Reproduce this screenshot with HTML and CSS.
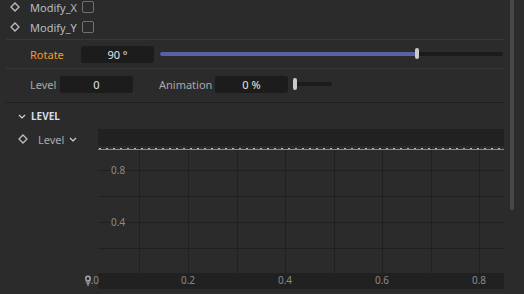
FILE: index.html
```html
<!DOCTYPE html>
<html lang="en">
<head>
    <meta charset="UTF-8">
    <title>Level Properties</title>
    <link rel="stylesheet" href="styles.css">
</head>
<body>
    <div class="app">
        <div class="panel">
            <!-- Toggles -->
            <div class="check-row">
                <svg class="diamond" viewBox="0 0 10 10"><path d="M5 1 L9 5 L5 9 L1 5 Z"/></svg>
                <span class="label light">Modify_X</span>
                <span class="checkbox"></span>
            </div>
            <div class="check-row">
                <svg class="diamond" viewBox="0 0 10 10"><path d="M5 1 L9 5 L5 9 L1 5 Z"/></svg>
                <span class="label light">Modify_Y</span>
                <span class="checkbox"></span>
            </div>
            <div class="sep"></div>

            <!-- Rotate -->
            <div class="param-row rotate-row">
                <span class="label accent rotate-label">Rotate</span>
                <div class="field">90 °</div>
                <div class="slider">
                    <div class="track"><div class="fill" style="width: 255px"></div></div>
                    <div class="handle" style="left: 255px"></div>
                </div>
            </div>
            <div class="sep"></div>

            <!-- Level / Animation -->
            <div class="param-row level-row">
                <span class="label level-label">Level</span>
                <div class="field">0</div>
                <span class="label anim-label">Animation</span>
                <div class="field">0 %</div>
                <div class="mini-slider">
                    <div class="handle"></div>
                    <div class="mini-track"></div>
                </div>
            </div>
            <div class="sep dark"></div>

            <!-- Level section -->
            <div class="section-head">
                <svg class="chevron" viewBox="0 0 8 5"><path d="M1 1 L4 4 L7 1"/></svg>
                <span class="section-title">LEVEL</span>
            </div>
            <div class="graph-row">
                <div class="curve-select">
                    <svg class="diamond" viewBox="0 0 10 10"><path d="M5 1 L9 5 L5 9 L1 5 Z"/></svg>
                    <span class="label">Level</span>
                    <svg class="chevron small" viewBox="0 0 8 5"><path d="M1 1 L4 4 L7 1"/></svg>
                </div>
                <svg class="graph" width="424" height="165" viewBox="0 0 424 165">
                    <rect x="18" y="0" width="406" height="17" fill="#212121"/>
                    <g stroke="#202020" stroke-width="1">
                        <line x1="59.5" y1="0" x2="59.5" y2="160"/>
                        <line x1="108.5" y1="0" x2="108.5" y2="160"/>
                        <line x1="157.5" y1="0" x2="157.5" y2="160"/>
                        <line x1="205.5" y1="0" x2="205.5" y2="160"/>
                        <line x1="254.5" y1="0" x2="254.5" y2="160"/>
                        <line x1="302.5" y1="0" x2="302.5" y2="160"/>
                        <line x1="351.5" y1="0" x2="351.5" y2="160"/>
                        <line x1="399.5" y1="0" x2="399.5" y2="160"/>
                        <line x1="18" y1="41.5" x2="424" y2="41.5"/>
                        <line x1="18" y1="67.5" x2="424" y2="67.5"/>
                        <line x1="18" y1="93.5" x2="424" y2="93.5"/>
                        <line x1="18" y1="119.5" x2="424" y2="119.5"/>
                    </g>
                    <line x1="18" y1="20.5" x2="424" y2="20.5" stroke="#8a8a8a" stroke-width="1"/>
                    <line x1="19" y1="19.5" x2="424" y2="19.5" stroke="#b8b8b8" stroke-width="1.2" stroke-dasharray="2 5"/>
                    <rect x="18" y="144" width="406" height="16" fill="#212121"/>
                    <g class="axis-text">
                        <text x="31" y="45">0.8</text>
                        <text x="31" y="97">0.4</text>
                        <text x="12" y="155" text-anchor="middle">0.0</text>
                        <text x="108" y="155" text-anchor="middle">0.2</text>
                        <text x="205" y="155" text-anchor="middle">0.4</text>
                        <text x="302" y="155" text-anchor="middle">0.6</text>
                        <text x="399" y="155" text-anchor="middle">0.8</text>
                    </g>
                    <g stroke="#9fb0bf" stroke-width="1.2" fill="none">
                        <circle cx="8" cy="149.5" r="2.3"/>
                        <line x1="8" y1="151.5" x2="8" y2="157"/>
                    </g>
                </svg>
            </div>
        </div>
        <div class="scrollbar"><div class="thumb"></div></div>
    </div>
</body>
</html>
```

FILE: styles.css
```css
* {
    box-sizing: border-box;
    margin: 0;
    padding: 0;
}

body {
    background-color: #2b2b2b;
    font-family: 'Noto Sans', 'Open Sans', sans-serif;
    font-size: 11px;
    color: #a8a8a8;
    overflow: hidden;
}

.app {
    display: flex;
    height: 294px;
}

.panel {
    width: 510px;
    flex: 0 0 510px;
    padding: 0 6px;
    margin-top: -3px;
}

.label {
    white-space: nowrap;
    color: #a9a9a9;
}

.light {
    color: #b9bcc4;
}

.accent {
    color: #f09a2e;
}

.diamond {
    width: 10px;
    height: 10px;
    flex: 0 0 10px;
}

.diamond path {
    fill: none;
    stroke: #bdbdbd;
    stroke-width: 1.3;
}

.check-row {
    display: flex;
    align-items: center;
    height: 20px;
    padding-left: 4px;
}

.check-row .label {
    margin-left: 10px;
}

.checkbox {
    width: 12px;
    height: 12px;
    margin-left: 5px;
    border: 1px solid #707070;
    border-radius: 2px;
}

.sep {
    height: 1px;
    background: #383838;
}

.check-row + .sep {
    margin-top: 2px;
}

.sep.dark {
    background: #1f1f1f;
    margin-top: 3px;
}

.param-row {
    display: flex;
    align-items: center;
    padding-left: 24px;
}

.rotate-row {
    height: 28px;
}

.level-row {
    height: 30px;
}

.rotate-label {
    width: 51px;
}

.level-label {
    width: 30px;
}

.anim-label {
    width: 56px;
    margin-left: 26px;
}

.field {
    width: 73px;
    height: 17px;
    background: #1c1c1c;
    border-radius: 3px;
    color: #e4e4e4;
    text-align: center;
    line-height: 17px;
}

.slider {
    position: relative;
    flex: 1;
    height: 12px;
    margin-left: 6px;
    margin-right: 1px;
}

.track {
    position: absolute;
    left: 0;
    right: 0;
    top: 4px;
    height: 4px;
    background: #1b1b1b;
    border-radius: 2px;
    overflow: hidden;
}

.fill {
    height: 100%;
    background: #5b5fa6;
}

.handle {
    width: 4px;
    height: 11px;
    background: #cacaca;
    border-radius: 2px;
}

.slider .handle {
    position: absolute;
    top: 0;
}

.mini-slider {
    display: flex;
    align-items: center;
    margin-left: 5px;
}

.mini-slider .handle {
    height: 12px;
}

.mini-track {
    width: 35px;
    height: 4px;
    background: #1b1b1b;
    border-radius: 0 2px 2px 0;
}

.section-head {
    display: flex;
    align-items: center;
    height: 26px;
    padding-left: 12px;
}

.chevron {
    width: 8px;
    height: 5px;
}

.chevron path {
    fill: none;
    stroke: #cfd6de;
    stroke-width: 1.2;
}

.section-title {
    margin-left: 5px;
    font-size: 10px;
    font-weight: bold;
    color: #d6dee8;
}

.graph-row {
    display: flex;
    align-items: flex-start;
}

.curve-select {
    display: flex;
    align-items: center;
    width: 74px;
    height: 20px;
    padding-left: 12px;
}

.curve-select .label {
    margin-left: 10px;
}

.chevron.small {
    margin-left: 5px;
}

.graph {
    display: block;
}

.axis-text text {
    font-family: 'Noto Sans', sans-serif;
    font-size: 10px;
    fill: #8a8a8a;
}

.scrollbar {
    width: 4px;
    flex: 0 0 4px;
}

.thumb {
    height: 210px;
    background: #474747;
    border-radius: 0 0 2px 2px;
}
```
